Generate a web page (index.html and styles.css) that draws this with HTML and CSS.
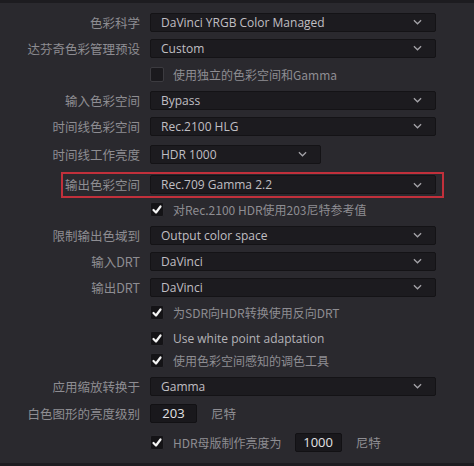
FILE: index.html
```html
<html>

<head>
    <meta charset="UTF-8">
    <meta name="viewport" content="width=device-width, initial-scale=1.0">
    <title>色彩管理</title>
    <link rel="stylesheet" href="styles.css">
</head>

<body>
    <div class="panel">
        <div class="row">
            <span class="label">色彩科学</span>
            <div class="select"><span>DaVinci YRGB Color Managed</span><svg class="chev" viewBox="0 0 10 6"><path d="M1 1l4 4 4-4"/></svg></div>
        </div>
        <div class="row">
            <span class="label">达芬奇色彩管理预设</span>
            <div class="select"><span>Custom</span><svg class="chev" viewBox="0 0 10 6"><path d="M1 1l4 4 4-4"/></svg></div>
        </div>
        <div class="row">
            <span class="label"></span>
            <label class="check"><span class="box"></span>使用独立的色彩空间和Gamma</label>
        </div>
        <div class="row">
            <span class="label">输入色彩空间</span>
            <div class="select"><span>Bypass</span><svg class="chev" viewBox="0 0 10 6"><path d="M1 1l4 4 4-4"/></svg></div>
        </div>
        <div class="row">
            <span class="label">时间线色彩空间</span>
            <div class="select"><span>Rec.2100 HLG</span><svg class="chev" viewBox="0 0 10 6"><path d="M1 1l4 4 4-4"/></svg></div>
        </div>
        <div class="row mt-2">
            <span class="label">时间线工作亮度</span>
            <div class="select narrow"><span>HDR 1000</span><svg class="chev" viewBox="0 0 10 6"><path d="M1 1l4 4 4-4"/></svg></div>
        </div>
        <div class="row highlight">
            <span class="label">输出色彩空间</span>
            <div class="select"><span>Rec.709 Gamma 2.2</span><svg class="chev" viewBox="0 0 10 6"><path d="M1 1l4 4 4-4"/></svg></div>
        </div>
        <div class="row short">
            <span class="label"></span>
            <label class="check"><span class="box on"><svg viewBox="0 0 12 12"><path d="M2.5 6.5l2.5 2.5 4.5-6"/></svg></span>对Rec.2100 HDR使用203尼特参考值</label>
        </div>
        <div class="row mt-2">
            <span class="label">限制输出色域到</span>
            <div class="select"><span>Output color space</span><svg class="chev" viewBox="0 0 10 6"><path d="M1 1l4 4 4-4"/></svg></div>
        </div>
        <div class="row">
            <span class="label">输入DRT</span>
            <div class="select"><span>DaVinci</span><svg class="chev" viewBox="0 0 10 6"><path d="M1 1l4 4 4-4"/></svg></div>
        </div>
        <div class="row">
            <span class="label">输出DRT</span>
            <div class="select"><span>DaVinci</span><svg class="chev" viewBox="0 0 10 6"><path d="M1 1l4 4 4-4"/></svg></div>
        </div>
        <div class="row short mt-1">
            <span class="label"></span>
            <label class="check"><span class="box on"><svg viewBox="0 0 12 12"><path d="M2.5 6.5l2.5 2.5 4.5-6"/></svg></span>为SDR向HDR转换使用反向DRT</label>
        </div>
        <div class="row short mt-4">
            <span class="label"></span>
            <label class="check latin"><span class="box on"><svg viewBox="0 0 12 12"><path d="M2.5 6.5l2.5 2.5 4.5-6"/></svg></span>Use white point adaptation</label>
        </div>
        <div class="row short">
            <span class="label"></span>
            <label class="check"><span class="box on"><svg viewBox="0 0 12 12"><path d="M2.5 6.5l2.5 2.5 4.5-6"/></svg></span>使用色彩空间感知的调色工具</label>
        </div>
        <div class="row mt-2">
            <span class="label">应用缩放转换于</span>
            <div class="select"><span>Gamma</span><svg class="chev" viewBox="0 0 10 6"><path d="M1 1l4 4 4-4"/></svg></div>
        </div>
        <div class="row mt-1">
            <span class="label">白色图形的亮度级别</span>
            <div class="field">203</div>
            <span class="unit">尼特</span>
        </div>
        <div class="row mt-3">
            <span class="label"></span>
            <label class="check"><span class="box on"><svg viewBox="0 0 12 12"><path d="M2.5 6.5l2.5 2.5 4.5-6"/></svg></span>HDR母版制作亮度为</label>
            <div class="field wide">1000</div>
            <span class="unit">尼特</span>
        </div>
    </div>
</body>

</html>
```

FILE: styles.css
```css
body {
    margin: 0;
    background-color: #2a292e;
    font-family: "Open Sans", "Noto Sans CJK SC", sans-serif;
    width: 474px;
    height: 466px;
    overflow: hidden;
    border-top: 3px solid #1d1c20;
    border-bottom: 3px solid #1d1c20;
    box-sizing: border-box;
}

.panel {
    padding-top: 6px;
}

.row {
    display: flex;
    align-items: center;
    height: 26px;
}

.row.short {
    height: 22px;
}

.mt-1 { margin-top: 1px; }
.mt-2 { margin-top: 2px; }
.mt-3 { margin-top: 3px; }
.mt-4 { margin-top: 4px; }

.label {
    width: 150px;
    flex-shrink: 0;
    box-sizing: border-box;
    padding-right: 10px;
    text-align: right;
    font-family: "Noto Sans CJK SC", sans-serif;
    font-size: 12.5px;
    color: #8e8d92;
    white-space: nowrap;
}

.highlight {
    margin-top: 5px;
    margin-left: 61px;
    width: 383px;
    box-sizing: border-box;
    border: 2px solid #c1303b;
    align-items: flex-start;
    padding-top: 1px;
}

.highlight .label {
    width: 87px;
    line-height: 19px;
}

.select {
    width: 286px;
    height: 19px;
    box-sizing: border-box;
    display: flex;
    align-items: center;
    justify-content: space-between;
    padding: 0 10px;
    background: #1c1b1f;
    border: 1px solid #141316;
    border-radius: 2px;
    color: #c0bfc3;
    font-size: 12px;
}

.select.narrow {
    width: 171px;
}

.chev {
    width: 9px;
    height: 6px;
    margin-right: 3px;
    fill: none;
    stroke: #a4a3a8;
    stroke-width: 1.4;
}

.check {
    display: flex;
    align-items: center;
    gap: 9px;
    font-family: "Noto Sans CJK SC", sans-serif;
    font-size: 12px;
    color: #8e8d92;
    white-space: nowrap;
}

.check.latin {
    font-family: "Open Sans", sans-serif;
    font-size: 12px;
    color: #b4b3b8;
}

.box {
    width: 14px;
    height: 15px;
    box-sizing: border-box;
    border: 1px solid #3c3b40;
    border-radius: 2px;
    background: #1b1a1e;
    display: flex;
    align-items: center;
    justify-content: center;
}

.box.on {
    background: #141316;
    border-color: #2c2b30;
}

.box svg {
    width: 13px;
    height: 13px;
    fill: none;
    stroke: #f4f4f4;
    stroke-width: 2.2;
    stroke-linecap: round;
    stroke-linejoin: round;
}

.field {
    width: 47px;
    height: 19px;
    box-sizing: border-box;
    display: flex;
    align-items: center;
    justify-content: center;
    background: #19181c;
    border: 1px solid #121114;
    border-radius: 2px;
    color: #e2e2e4;
    font-size: 13px;
}

.field.wide {
    margin-left: 13px;
}

.unit {
    margin-left: 14px;
    font-family: "Noto Sans CJK SC", sans-serif;
    font-size: 12.5px;
    color: #8e8d92;
}
```
